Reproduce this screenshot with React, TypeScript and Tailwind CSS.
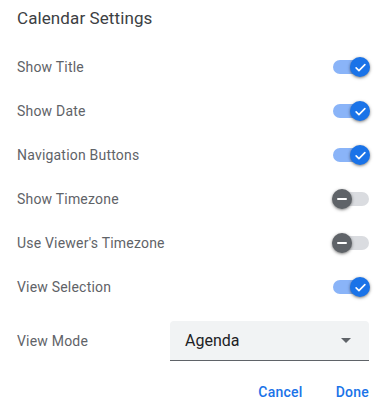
import { useState } from "react";

type Setting = { key: string; label: string; on: boolean };

const INITIAL: Setting[] = [
  { key: "title", label: "Show Title", on: true },
  { key: "date", label: "Show Date", on: true },
  { key: "nav", label: "Navigation Buttons", on: true },
  { key: "tz", label: "Show Timezone", on: false },
  { key: "viewerTz", label: "Use Viewer's Timezone", on: false },
  { key: "viewSel", label: "View Selection", on: true },
];

// Material-style switch: light track, round thumb carrying a check / minus mark.
function Switch({ on, onToggle }: { on: boolean; onToggle: () => void }) {
  return (
    <button
      type="button"
      role="switch"
      aria-checked={on}
      onClick={onToggle}
      className="relative h-[14px] w-[36px] shrink-0"
    >
      <span
        className={`absolute inset-0 rounded-full ${
          on ? "bg-[#8ab4f8]" : "bg-[#dadce0]"
        }`}
      />
      <span
        className={`absolute top-1/2 flex h-[20px] w-[20px] -translate-y-1/2 items-center justify-center rounded-full shadow-[0_1px_2px_rgba(0,0,0,0.3),0_1px_3px_1px_rgba(0,0,0,0.15)] ${
          on ? "left-[17px] bg-[#1a73e8]" : "left-[-1px] bg-[#5f6368]"
        }`}
      >
        {on ? (
          <svg viewBox="0 0 24 24" className="h-[15px] w-[15px]" fill="none">
            <path
              d="M5 12.5l4.5 4.5L19 7.5"
              stroke="white"
              strokeWidth="2.6"
              strokeLinecap="round"
              strokeLinejoin="round"
            />
          </svg>
        ) : (
          <span className="h-[2px] w-[10px] rounded bg-white" />
        )}
      </span>
    </button>
  );
}

export default function App() {
  const [settings, setSettings] = useState(INITIAL);

  function toggle(key: string) {
    setSettings((s) => s.map((x) => (x.key === key ? { ...x, on: !x.on } : x)));
  }

  return (
    <div
      className="h-[413px] w-[386px] bg-white px-[17px]"
      style={{ fontFamily: "Roboto, 'Noto Sans', Arial, sans-serif" }}
    >
      <div className="flex h-[37px] items-center text-[17px] tracking-[0.1px] text-[#3c4043]">
        Calendar Settings
      </div>

      <div className="mt-[8px] flex flex-col">
        {settings.map((s) => (
          <div key={s.key} className="flex h-[44px] items-center justify-between">
            <span className="text-[14px] tracking-[0.2px] text-[#5f6368]">
              {s.label}
            </span>
            <Switch on={s.on} onToggle={() => toggle(s.key)} />
          </div>
        ))}
      </div>

      <div className="mt-[12px] flex h-[40px] items-center">
        <span className="w-[153px] text-[14px] tracking-[0.2px] text-[#5f6368]">
          View Mode
        </span>
        <div className="flex h-[40px] flex-1 items-center justify-between rounded-t-[4px] border-b border-[#5f6368] bg-[#f1f3f4] pl-[15px] pr-[18px]">
          <span className="text-[16px] text-[#202124]">Agenda</span>
          <svg viewBox="0 0 10 5" className="h-[5px] w-[10px]">
            <path d="M0 0h10L5 5z" fill="#5f6368" />
          </svg>
        </div>
      </div>

      <div className="mt-[13px] flex h-[36px] items-center justify-end gap-[33px]">
        <button type="button" className="text-[14px] font-medium tracking-[0.25px] text-[#1a73e8]">
          Cancel
        </button>
        <button type="button" className="text-[14px] font-medium tracking-[0.25px] text-[#1a73e8]">
          Done
        </button>
      </div>
    </div>
  );
}
